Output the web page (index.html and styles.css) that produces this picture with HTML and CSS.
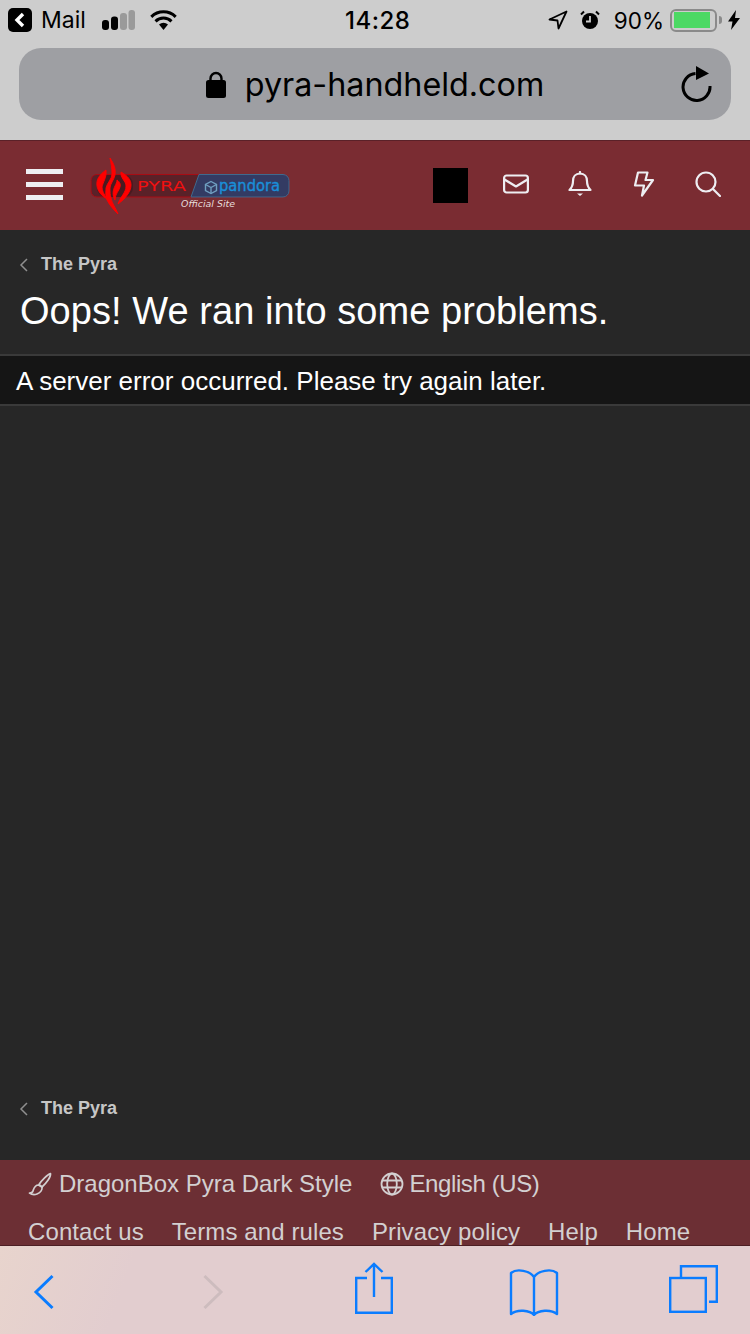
FILE: index.html
```html
<!DOCTYPE html>
<html lang="en">
<head>
    <meta charset="UTF-8">
    <meta name="viewport" content="width=device-width, initial-scale=1.0">
    <title>Oops! We ran into some problems. | Pyra</title>
    <link rel="stylesheet" href="styles.css">
</head>
<body>
    <div class="browser-top">
        <div class="status-bar">
            <div class="status-left">
                <svg class="back-app" width="24" height="24" viewBox="0 0 24 24"><rect width="24" height="24" rx="5" fill="#000"/><path d="M15 6 9 12l6 6" fill="none" stroke="#fff" stroke-width="3.4"/></svg>
                <span class="status-mail">Mail</span>
                <svg class="signal" width="33" height="20" viewBox="0 0 33 20"><rect x="0" y="10" width="7" height="10" rx="3" fill="#000"/><rect x="9" y="6.500" width="7" height="13.500" rx="3" fill="#000"/><rect x="18" y="3" width="7" height="17" rx="3" fill="#9a9a9a"/><rect x="26.500" y="0" width="6.500" height="20" rx="3" fill="#9a9a9a"/></svg>
                <svg class="wifi" width="27" height="20" viewBox="0 0 27 20"><path d="M1.300 6.800a17.500 17.500 0 0 1 24.400 0M5.500 11.300a11.600 11.600 0 0 1 16 0" fill="none" stroke="#000" stroke-width="3"/><path d="M9 14.500a7 7 0 0 1 9 0L13.500 20z" fill="#000"/></svg>
            </div>
            <div class="status-time">14:28</div>
            <div class="status-right">
                <svg class="nav-arrow" width="20" height="20" viewBox="0 0 20 20"><path d="M18.500 1.500 1.500 9.500l8 1 1 8z" fill="none" stroke="#000" stroke-width="1.800" stroke-linejoin="round"/></svg>
                <svg class="alarm" width="20" height="20" viewBox="0 0 20 20"><circle cx="10" cy="11" r="8" fill="#000"/><path d="M10 6v5.500H6" fill="none" stroke="#cdcdcd" stroke-width="1.800"/><path d="M1 4.500 4 1.500M19 4.500l-3-3" stroke="#000" stroke-width="2"/></svg>
                <span class="status-batt">90%</span>
                <div class="battery"><div class="battery-fill"></div></div>
                <div class="battery-tip"></div>
                <svg class="bolt" width="12" height="20" viewBox="0 0 12 20"><path d="M8 0 0 11.500h4.500L3 20l9-12H7z" fill="#000"/></svg>
            </div>
        </div>
        <div class="url-bar">
            <div class="url-center">
                <svg width="20" height="27" viewBox="0 0 20 27"><path d="M4.500 12V7.500a5.500 5.500 0 0 1 11 0V12" fill="none" stroke="#000" stroke-width="2.400"/><rect x="0" y="9" width="20" height="18" rx="2.500" fill="#000"/></svg>
                <span class="url-text">pyra-handheld.com</span>
            </div>
            <svg class="reload" width="32" height="36" viewBox="0 0 32 36"><path d="M14.500 7.500A13.500 13.500 0 1 0 29 20" fill="none" stroke="#000" stroke-width="3"/><path d="M15 0l13 7.500L15 14z" fill="#000"/></svg>
        </div>
    </div>

    <header class="site-header">
        <div class="burger"><span></span><span></span><span></span></div>
        <svg class="logo" width="202" height="56" viewBox="0 0 202 56">
            <rect x="1" y="16.500" width="198" height="22.500" rx="6" fill="#5a2128" stroke="#a80c14"/>
            <path d="M109 16.500h84a6 6 0 0 1 6 6V33a6 6 0 0 1-6 6h-92z" fill="#333b63" stroke="#3f6a8e"/>
            <rect x="7" y="17" width="36" height="22" rx="9" fill="#4a1a20"/>
            <g fill="#f00" stroke="#f00" stroke-width=".9" stroke-linejoin="round">
                <path d="M20 0c4 6 6 11 5 17-1 5-5 9-5 13 0 4 0 7 1 10 1 6 5 10 7 16-4-4-8-8-11-14-2-4-1-8-1-12 1-5 6-9 6-14 0-6-1-11-2-16z"/>
                <path d="M16 12c-7 5-10 10-9 16 1 6 5 10 10 13-3-5-5-8-5-12 1-5 5-10 4-17z"/>
                <path d="M31 14c7 4 10 8 10 13 0 7-6 14-13 19 2-7 8-11 8-18 0-5-6-8-5-14z"/>
                <path d="M27 22c3 2 4 5 3 7-1 4-5 7-5 13-3-5-2-10 0-14 1-2 2-4 2-6z"/>
            </g>
            <text class="logo-pyra" x="47" y="32.500" textLength="49" lengthAdjust="spacingAndGlyphs">PYRA</text>
            <g fill="none" stroke="#6f9fc0" stroke-width="1.400"><path d="M121 23.500l5.500 3v6l-5.500 3-5.500-3v-6z"/><path d="M115.500 26.500l5.500 3 5.500-3M121 29.500v6"/></g>
            <text class="logo-pandora" x="129" y="32.500" textLength="61" lengthAdjust="spacingAndGlyphs">pandora</text>
            <text class="logo-tag" x="91" y="48.500" textLength="54" lengthAdjust="spacingAndGlyphs">Official Site</text>
        </svg>
        <div class="header-icons">
            <div class="avatar"></div>
            <div class="icon-cell"><svg width="26" height="20" viewBox="0 0 26 20" fill="none" stroke="#eeeef2" stroke-width="2.200" stroke-linejoin="round"><rect x="1.100" y="1.500" width="23.800" height="17" rx="2.500"/><path d="M1.500 5.500 13 12.500l11.500-7"/></svg></div>
            <div class="icon-cell"><svg width="24" height="26" viewBox="0 0 24 26" fill="none" stroke="#eeeef2" stroke-width="2.200" stroke-linejoin="round"><path d="M12 2.500c-4.500 0-7 3.500-7 7.500 0 5-1.500 7-3.500 9h21c-2-2-3.500-4-3.500-9 0-4-2.500-7.500-7-7.500z"/><path d="M12 1v1.500" stroke-linecap="round"/><path d="M9 22.500h6L12 25z" fill="#eeeef2" stroke="none"/></svg></div>
            <div class="icon-cell"><svg width="22" height="26" viewBox="0 0 22 26" fill="none" stroke="#eeeef2" stroke-width="2.200" stroke-linejoin="round"><path d="M5 1.500h9.500L12.500 9H20L9 24.500 11 14.500H2z"/></svg></div>
            <div class="icon-cell"><svg width="26" height="26" viewBox="0 0 26 26" fill="none" stroke="#eeeef2" stroke-width="2.200" stroke-linecap="round"><circle cx="11" cy="11" r="9.500"/><path d="M18 18l7 7"/></svg></div>
        </div>
    </header>

    <main class="content">
        <div class="crumb">
            <svg width="10" height="14" viewBox="0 0 10 14"><path d="M8 1 2 7l6 6" fill="none" stroke="#8f8f8f" stroke-width="1.500"/></svg>
            <span>The Pyra</span>
        </div>
        <h1 class="page-title">Oops! We ran into some problems.</h1>
        <div class="error-block">A server error occurred. Please try again later.</div>
        <div class="crumb crumb-bottom">
            <svg width="10" height="14" viewBox="0 0 10 14"><path d="M8 1 2 7l6 6" fill="none" stroke="#8f8f8f" stroke-width="1.500"/></svg>
            <span>The Pyra</span>
        </div>
    </main>

    <footer class="site-footer">
        <div class="footer-row">
            <span class="footer-item">
                <svg width="24" height="24" viewBox="0 0 24 24" fill="none" stroke="#d3d0d1" stroke-width="1.700" stroke-linejoin="round"><path d="M22.500 1.500c-3 1-9 7-11.500 11l3 2.500c4-3.500 9-10 8.500-13.500z"/><path d="M10.500 13C6.500 13 6 16 5 19c-.5 1.500-2 2-3.500 2 2 1.500 5 2 7.500 1 3-1.200 5.500-4 5-7z"/></svg>
                DragonBox Pyra Dark Style
            </span>
            <span class="footer-item footer-lang">
                <svg width="24" height="24" viewBox="0 0 24 24" fill="none" stroke="#d3d0d1" stroke-width="1.800"><circle cx="12" cy="12" r="10.500"/><ellipse cx="12" cy="12" rx="4.800" ry="10.500"/><path d="M2 8.500h20M2 15.500h20"/></svg>
                English (US)
            </span>
        </div>
        <div class="footer-row footer-links">
            <span>Contact us</span>
            <span>Terms and rules</span>
            <span>Privacy policy</span>
            <span>Help</span>
            <span>Home</span>
        </div>
    </footer>

    <nav class="browser-bottom">
        <svg class="tool-back" width="22" height="36" viewBox="0 0 22 36"><path d="M19.500 2 3 18l16.500 16" fill="none" stroke="#0a7cff" stroke-width="3"/></svg>
        <svg class="tool-forward" width="22" height="36" viewBox="0 0 22 36"><path d="M2.500 2 19 18 2.500 34" fill="none" stroke="#cdbcbe" stroke-width="3"/></svg>
        <svg class="tool-share" width="38" height="52" viewBox="0 0 38 52" fill="none" stroke="#0a7cff" stroke-width="2.400"><path d="M12 16H1.200v34.800h35.600V16H26"/><path d="M19 35V2M10.500 10 19 2l8.500 8"/></svg>
        <svg class="tool-book" width="50" height="48" viewBox="0 0 50 48" fill="none" stroke="#0a7cff" stroke-width="2.400" stroke-linejoin="round"><path d="M25 9C21 3 8 0 2 5v41c6-5 19-4 23 1 4-5 17-6 23-1V5C42 0 29 3 25 9zM25 9v38"/></svg>
        <svg class="tool-tabs" width="49" height="48" viewBox="0 0 49 48" fill="none" stroke="#0a7cff" stroke-width="2.400"><rect x="1.200" y="13" width="35.600" height="33.800"/><path d="M12 12V1.200h35.800v35.600H40"/></svg>
    </nav>
</body>
</html>
```

FILE: styles.css
```css
html, body {
    margin: 0;
    padding: 0;
}
body {
    width: 750px;
    height: 1334px;
    overflow: hidden;
    display: flex;
    flex-direction: column;
    background-color: #272727;
    font-family: "Liberation Sans", Arial, sans-serif;
}

/* browser chrome, top */
.browser-top {
    height: 140px;
    flex: none;
    box-sizing: border-box;
    padding: 0 19px;
    background-color: #cdcdcd;
    color: #000;
}
.status-bar {
    height: 40px;
    margin: 0 -11px 8px;
    display: flex;
    align-items: center;
    justify-content: space-between;
    position: relative;
    font-family: Inter, "Liberation Sans", sans-serif;
    font-size: 23px;
}
.status-left, .status-right {
    display: flex;
    align-items: center;
}
.status-mail {
    margin-left: 9px;
}
.signal {
    margin-left: 16px;
}
.wifi {
    margin-left: 15px;
}
.status-time {
    position: absolute;
    left: 337px;
    font-size: 24px;
    font-weight: 500;
    letter-spacing: .5px;
}
.status-right .nav-arrow {
    margin-right: 12px;
}
.status-right .alarm {
    margin-right: 14px;
}
.status-right .bolt {
    margin-right: 2px;
}
.status-batt {
    margin-right: 6px;
    font-size: 22.500px;
}
.battery {
    width: 47px;
    height: 23px;
    box-sizing: border-box;
    padding: 1px 1.500px 2px;
    border: 2px solid #8a8a8a;
    border-radius: 6px;
}
.battery-fill {
    width: 36px;
    height: 100%;
    background-color: #4cd964;
}
.battery-tip {
    width: 3px;
    height: 8px;
    margin: 0 6px 0 2px;
    background-color: #8a8a8a;
    border-radius: 0 3px 3px 0;
}
.url-bar {
    height: 72px;
    display: flex;
    align-items: center;
    justify-content: center;
    position: relative;
    background-color: #9e9fa3;
    border-radius: 22px;
}
.url-center {
    display: flex;
    align-items: center;
    gap: 19px;
}
.url-text {
    font-size: 32.300px;
    font-family: Inter, "Liberation Sans", sans-serif;
}
.reload {
    position: absolute;
    right: 18px;
    top: 18px;
}

/* site header */
.site-header {
    height: 90px;
    flex: none;
    box-sizing: border-box;
    display: flex;
    align-items: center;
    padding: 0 10px 0 26px;
    background-color: #7a2c32;
    border-top: 1px solid #5a2128;
}
.burger {
    width: 37px;
    margin-bottom: 3px;
    display: flex;
    flex-direction: column;
    gap: 8px;
}
.burger span {
    height: 5px;
    background-color: #eeeef2;
}
.logo {
    margin-left: 27px;
}
.logo-pyra {
    font-family: "DejaVu Sans", sans-serif;
    font-size: 13.500px;
    fill: #f01010;
}
.logo-pandora {
    font-family: "DejaVu Sans", sans-serif;
    font-size: 16px;
    fill: #1a8fd8;
    stroke: #1a8fd8;
    stroke-width: .4px;
}
.logo-tag {
    font-family: "DejaVu Sans", sans-serif;
    font-size: 9px;
    font-style: italic;
    fill: #e6dcdc;
}
.header-icons {
    margin-left: auto;
    display: flex;
    align-items: center;
}
.avatar {
    width: 35px;
    height: 35px;
    margin-right: 16px;
    background-color: #000;
}
.icon-cell {
    width: 64px;
    margin-bottom: 3px;
    display: flex;
    justify-content: center;
}

/* content */
.content {
    flex: 1;
    display: flex;
    flex-direction: column;
    background-color: #272727;
}
.crumb {
    display: flex;
    align-items: center;
    gap: 12px;
    margin: 24px 0 0 19px;
    font-size: 18px;
    font-weight: bold;
    color: #c6c6c6;
}
.crumb-bottom {
    margin-top: auto;
    margin-bottom: 41px;
}
.page-title {
    margin: 15px 0 21px 20px;
    font-size: 38px;
    letter-spacing: .06px;
    font-weight: normal;
    color: #fff;
}
.error-block {
    box-sizing: border-box;
    height: 52px;
    padding-left: 16px;
    line-height: 51px;
    font-size: 26px;
    color: #fff;
    background-color: #151515;
    border-top: 2px solid #3a3a3a;
    border-bottom: 2px solid #3a3a3a;
}

/* footer */
.site-footer {
    height: 86px;
    flex: none;
    box-sizing: border-box;
    overflow: hidden;
    padding: 8px 28px 0;
    font-size: 24px;
    color: #d3d0d1;
    background-color: #6c2f34;
    border-bottom: 1px solid #4c1f24;
}
.footer-row {
    display: flex;
    align-items: center;
    gap: 28px;
    height: 32px;
    white-space: nowrap;
}
.footer-item {
    display: flex;
    align-items: center;
    gap: 7px;
}
.footer-lang {
    letter-spacing: -.4px;
    gap: 5px;
}
.footer-links {
    margin-top: 16px;
    letter-spacing: .1px;
}

/* browser chrome, bottom */
.browser-bottom {
    height: 88px;
    flex: none;
    box-sizing: border-box;
    display: flex;
    align-items: flex-start;
    padding: 0 0 0 33px;
    background-color: #e2cdcf;
    background-image: linear-gradient(110deg, #e8d4cd 0, #e2cdcf 130px);
}
.tool-back {
    margin-top: 28px;
}
.tool-forward {
    margin: 28px 0 0 147px;
}
.tool-share {
    margin: 16px 0 0 131px;
}
.tool-book {
    margin: 22px 0 0 116px;
}
.tool-tabs {
    margin: 19px 0 0 110px;
}
```
